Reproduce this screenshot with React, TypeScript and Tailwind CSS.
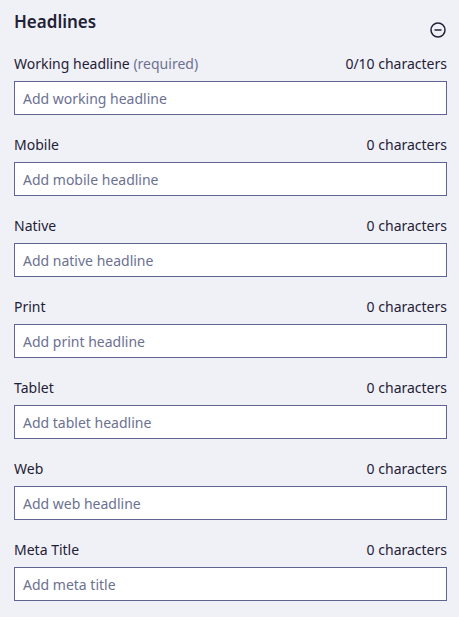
import React from 'react';

const fields = [
  { label: 'Working headline', required: true, count: '0/10 characters', placeholder: 'Add working headline' },
  { label: 'Mobile', count: '0 characters', placeholder: 'Add mobile headline' },
  { label: 'Native', count: '0 characters', placeholder: 'Add native headline' },
  { label: 'Print', count: '0 characters', placeholder: 'Add print headline' },
  { label: 'Tablet', count: '0 characters', placeholder: 'Add tablet headline' },
  { label: 'Web', count: '0 characters', placeholder: 'Add web headline' },
  { label: 'Meta Title', count: '0 characters', placeholder: 'Add meta title' },
];

export default function App() {
  return (
    <div
      className="w-[459px] h-[617px] bg-[#f0f1f6] pl-[14px] pr-[12px] pt-[6px] text-[#1f2236] flex flex-col gap-[20px]"
      style={{ fontFamily: '"Noto Sans", "Open Sans", sans-serif' }}
    >
      {/* Header */}
      <div className="flex justify-between items-start h-[28px]">
        <h2 className="text-[17px] leading-[28px] font-semibold pt-[2px]">Headlines</h2>
        <button className="mt-[16px] mr-[1px] block" aria-label="Collapse">
          <svg className="block" width="16" height="16" viewBox="0 0 16 16" fill="none" stroke="#1f2236" strokeWidth="1.5">
            <circle cx="8" cy="8" r="7" />
            <line x1="4.5" y1="8" x2="11.5" y2="8" />
          </svg>
        </button>
      </div>

      {fields.map((f) => (
        <div key={f.label} className="flex flex-col gap-[7px]">
          <div className="flex justify-between items-center h-[20px] text-[14px] leading-[20px]">
            <span>
              {f.label}
              {f.required && <span className="text-[#6c7190]"> (required)</span>}
            </span>
            <span>{f.count}</span>
          </div>
          <input
            className="h-[34px] w-full bg-white border border-[#5f6590] px-[8px] text-[14px] outline-none placeholder:text-[#6c7190]"
            placeholder={f.placeholder}
          />
        </div>
      ))}
    </div>
  );
}
